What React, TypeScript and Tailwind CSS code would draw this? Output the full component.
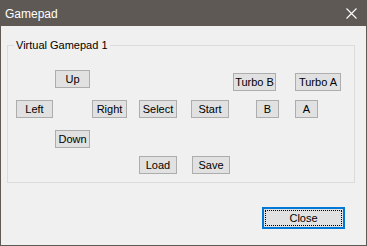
const font = { fontFamily: '"Liberation Sans", Arial, sans-serif' };

type BtnProps = { label: string; w: string; ml: string; mt?: string };

const Btn = ({ label, w, ml, mt = "mt-0" }: BtnProps) => (
  <div
    className={`${w} ${ml} ${mt} h-[18px] shrink-0 flex items-center justify-center bg-[#e1e1e1] border border-[#adadad] text-[11px] text-black leading-none`}
  >
    {label}
  </div>
);

const App = () => {
  return (
    <div
      className="w-[367px] h-[246px] border border-[#5e5955] bg-[#f0f0f0] flex flex-col"
      style={font}
    >
      <div className="h-[25px] bg-[#5e5955] flex items-center justify-between pl-[4px] pr-[9px]">
        <span className="text-white text-[12px]">Gamepad</span>
        <svg width="11" height="11" viewBox="0 0 11 11">
          <path d="M0.5 0.5 L10.5 10.5 M10.5 0.5 L0.5 10.5" stroke="#fff" strokeWidth="1.1" />
        </svg>
      </div>

      <div className="relative ml-[6px] mt-[19px] w-[348px] h-[138px] border border-[#dcdcdc] pt-[24px]">
        <span className="absolute -top-[8px] left-[6px] px-[2px] bg-[#f0f0f0] text-[11px] leading-[14px] text-black">
          Virtual Gamepad 1
        </span>

        <div className="flex items-start h-[30px]">
          <Btn label="Up" w="w-[35px]" ml="ml-[47px]" />
          <Btn label="Turbo B" w="w-[43px]" ml="ml-[143px]" mt="mt-[3px]" />
          <Btn label="Turbo A" w="w-[46px]" ml="ml-[19px]" mt="mt-[3px]" />
        </div>

        <div className="flex items-start h-[30px]">
          <Btn label="Left" w="w-[37px]" ml="ml-[8px]" />
          <Btn label="Right" w="w-[35px]" ml="ml-[39px]" />
          <Btn label="Select" w="w-[38px]" ml="ml-[12px]" />
          <Btn label="Start" w="w-[38px]" ml="ml-[14px]" />
          <Btn label="B" w="w-[23px]" ml="ml-[27px]" />
          <Btn label="A" w="w-[23px]" ml="ml-[16px]" />
        </div>

        <div className="flex items-start h-[26px]">
          <Btn label="Down" w="w-[35px]" ml="ml-[47px]" />
        </div>

        <div className="flex items-start h-[18px]">
          <Btn label="Load" w="w-[38px]" ml="ml-[131px]" />
          <Btn label="Save" w="w-[38px]" ml="ml-[15px]" />
        </div>
      </div>

      <div className="ml-[261px] mt-[24px] w-[83px] h-[22px] border-2 border-[#0078d7] bg-[#e1e1e1] p-[1px]">
        <div className="w-full h-full border border-dotted border-black flex items-center justify-center text-[11px] text-black leading-none">
          Close
        </div>
      </div>
    </div>
  );
};

export default App;
